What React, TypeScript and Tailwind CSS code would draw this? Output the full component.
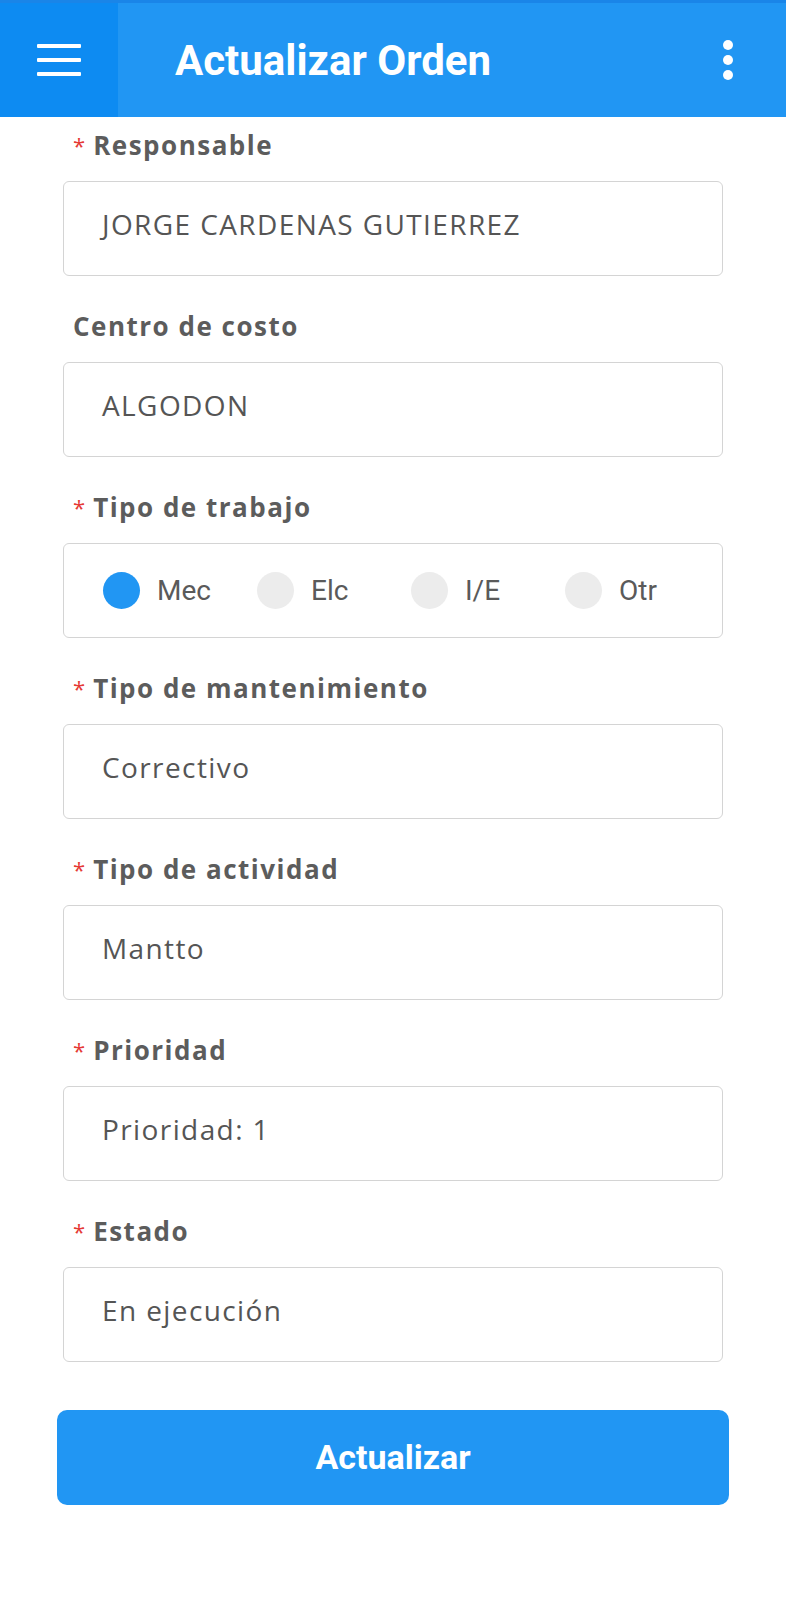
import React from 'react';

const poppins = { fontFamily: '"Open Sans", "Noto Sans", sans-serif' };

interface Field {
  label: string;
  required: boolean;
  value?: string;
}

const fields: Field[] = [
  { label: 'Responsable', required: true, value: 'JORGE CARDENAS GUTIERREZ' },
  { label: 'Centro de costo', required: false, value: 'ALGODON' },
  { label: 'Tipo de trabajo', required: true },
  { label: 'Tipo de mantenimiento', required: true, value: 'Correctivo' },
  { label: 'Tipo de actividad', required: true, value: 'Mantto' },
  { label: 'Prioridad', required: true, value: 'Prioridad: 1' },
  { label: 'Estado', required: true, value: 'En ejecución' },
];

const radios = ['Mec', 'Elc', 'I/E', 'Otr'];

const Header = () => (
  <div className="flex h-[117px] bg-[#2196f3] border-t-[3px] border-[#1a85e8]">
    <div className="flex w-[118px] items-center justify-center bg-[#0d8bf2]">
      <svg width="44" height="34" viewBox="0 0 44 34">
        <rect x="0" y="1" width="44" height="4" rx="1" fill="white" />
        <rect x="0" y="15" width="44" height="4" rx="1" fill="white" />
        <rect x="0" y="29" width="44" height="4" rx="1" fill="white" />
      </svg>
    </div>
    <div
      className="flex flex-1 items-center pl-[57px] text-[42px] font-bold text-white"
      style={{ fontFamily: 'Roboto, sans-serif' }}
    >
      Actualizar Orden
    </div>
    <div className="flex w-[120px] items-center justify-center pl-[4px]">
      <svg width="12" height="40" viewBox="0 0 12 40">
        <circle cx="6" cy="5" r="5" fill="white" />
        <circle cx="6" cy="20" r="5" fill="white" />
        <circle cx="6" cy="35" r="5" fill="white" />
      </svg>
    </div>
  </div>
);

const RadioGroup = () => (
  <div className="flex h-[95px] items-center rounded-[6px] border border-[#d4d4d4] pl-[39px]">
    {radios.map((r, i) => (
      <div key={r} className="flex w-[154px] items-center gap-[17px]">
        <span
          className={`h-[37px] w-[37px] rounded-full ${i === 0 ? 'bg-[#2196f3]' : 'bg-[#ececec]'}`}
        />
        <span
          className="text-[28px] text-[#5a5a5a]"
          style={{ fontFamily: 'Roboto, sans-serif' }}
        >
          {r}
        </span>
      </div>
    ))}
  </div>
);

export default function App() {
  return (
    <div className="min-h-[1600px] w-[786px] bg-white">
      <Header />
      <div className="px-[63px] pt-[10px]" style={poppins}>
        {fields.map((f) => (
          <div key={f.label} className="mb-[32px]">
            <div className="mb-[18px] flex h-[36px] items-center pl-[10px]">
              {f.required && (
                <span className="mr-[8px] text-[22px] text-[#e53935]">*</span>
              )}
              <span className="text-[26px] font-bold tracking-[1.5px] text-[#5c5c5c]">
                {f.label}
              </span>
            </div>
            {f.value ? (
              <div className="flex h-[95px] items-center rounded-[6px] border border-[#d4d4d4] pl-[38px] pb-[9px] text-[28px] tracking-[1.4px] text-[#555555]">
                {f.value}
              </div>
            ) : (
              <RadioGroup />
            )}
          </div>
        ))}
      </div>
      <div className="px-[57px] pt-[16px]">
        <button
          className="flex h-[95px] w-full items-center justify-center rounded-[10px] bg-[#2196f3] text-[34px] font-bold text-white"
          style={{ fontFamily: 'Roboto, sans-serif' }}
        >
          Actualizar
        </button>
      </div>
    </div>
  );
}
